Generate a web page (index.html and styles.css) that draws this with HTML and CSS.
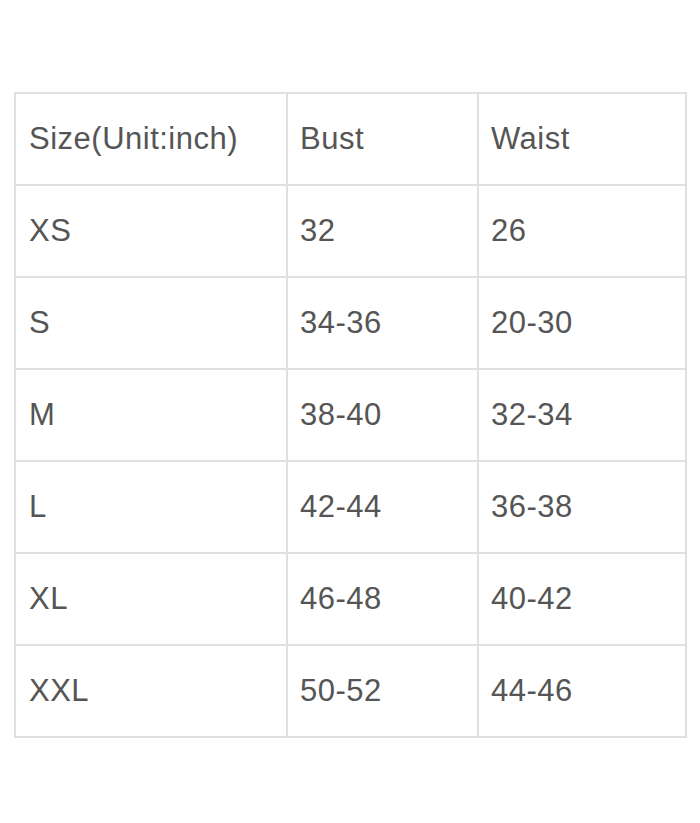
FILE: index.html
```html
<!DOCTYPE html>
<html>
<head>
<meta charset="utf-8">
<link rel="stylesheet" href="styles.css">
</head>
<body>
<table class="size-table">
  <colgroup>
    <col class="c1"><col class="c2"><col class="c3">
  </colgroup>
  <tr><td>Size(Unit:inch)</td><td>Bust</td><td>Waist</td></tr>
  <tr><td>XS</td><td>32</td><td>26</td></tr>
  <tr><td>S</td><td>34-36</td><td>20-30</td></tr>
  <tr><td>M</td><td>38-40</td><td>32-34</td></tr>
  <tr><td>L</td><td>42-44</td><td>36-38</td></tr>
  <tr><td>XL</td><td>46-48</td><td>40-42</td></tr>
  <tr><td>XXL</td><td>50-52</td><td>44-46</td></tr>
</table>
</body>
</html>
```

FILE: styles.css
```css
html, body {
  margin: 0;
  padding: 0;
  background: #ffffff;
}
.size-table {
  margin: 92px 0 0 14px;
  border-collapse: collapse;
  table-layout: fixed;
  width: 671px;
  font-family: "Liberation Sans", Arial, sans-serif;
  font-size: 31px;
  letter-spacing: 0.5px;
  color: #555555;
}
.c1 { width: 272px; }
.c2 { width: 191px; }
.c3 { width: 208px; }
.size-table td {
  border: 2px solid #e0e0e0;
  height: 90px;
  padding: 0 0 0 12px;
  vertical-align: middle;
  white-space: nowrap;
}
.size-table td:first-child {
  padding-left: 13px;
}
```
